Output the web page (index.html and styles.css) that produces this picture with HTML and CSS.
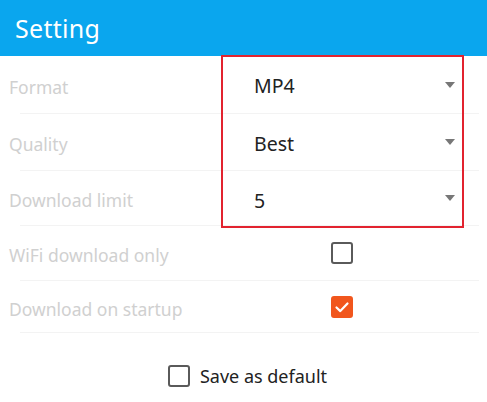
FILE: index.html
```html
<!DOCTYPE html>
<html>
<head>
<meta charset="utf-8">
<link rel="stylesheet" href="styles.css">
</head>
<body>
<div class="app">
  <header class="appbar"><h1 class="title">Setting</h1></header>
  <main class="settings">
    <div class="row r1">
      <span class="label">Format</span>
      <div class="value select"><span class="val">MP4</span><span class="caret"></span></div>
    </div>
    <div class="row r2">
      <span class="label">Quality</span>
      <div class="value select"><span class="val">Best</span><span class="caret"></span></div>
    </div>
    <div class="row r3">
      <span class="label">Download limit</span>
      <div class="value select"><span class="val">5</span><span class="caret"></span></div>
    </div>
    <div class="row r4">
      <span class="label">WiFi download only</span>
      <div class="value check-cell"><span class="box"></span></div>
    </div>
    <div class="row r5">
      <span class="label">Download on startup</span>
      <div class="value check-cell"><span class="box checked"><svg viewBox="0 0 22 22" width="22" height="22"><path d="M5.5 11.5l3.8 3.6 7.2-7.6" fill="none" stroke="#fff" stroke-width="2.2" stroke-linecap="round" stroke-linejoin="round"/></svg></span></div>
    </div>
    <div class="highlight"></div>
  </main>
  <footer class="footer">
    <label class="save"><span class="box"></span><span class="save-text">Save as default</span></label>
  </footer>
</div>
</body>
</html>
```

FILE: styles.css
```css
* { box-sizing: border-box; }
html, body { margin: 0; padding: 0; background: #fff; }
body { font-family: "Noto Sans", "Open Sans", "Liberation Sans", sans-serif; width: 487px; height: 402px; overflow: hidden; }
.appbar { height: 56px; background: #0aa6ee; display: flex; align-items: center; padding-left: 15px; }
.title { margin: 0; color: #fff; font-weight: 400; font-size: 25px; letter-spacing: 0.3px; }
.settings { position: relative; }
.row { display: flex; align-items: center; height: 58px; margin-left: 20px; margin-right: 8px; border-bottom: 1px solid #f3f3f3; }
.row.r2 { height: 57px; }
.row.r3 { height: 55px; }
.row.r4 { height: 55px; }
.row.r5 { height: 52px; }
.label { width: 212px; margin-left: -11px; font-size: 17.5px; color: #d0d0d0; padding-top: 4px; }
.value { flex: 1; display: flex; align-items: center; }
.select { padding-left: 33px; padding-right: 24px; }
.val { flex: 1; font-size: 19.5px; color: #222; padding-top: 2px; }
.r3 .val { padding-top: 5px; }
.caret { width: 0; height: 0; border-left: 5.5px solid transparent; border-right: 5.5px solid transparent; border-top: 6px solid #777; }
.check-cell { padding-left: 110px; }
.box { width: 22px; height: 22px; border: 2px solid #5a5a5a; border-radius: 3px; display: inline-flex; }
.box.checked { background: #f1561d; border-color: #f1561d; align-items: center; justify-content: center; }
.box.checked svg { margin: -2px; }
.highlight { position: absolute; left: 221px; top: -1px; width: 243px; height: 173px; border: 2px solid #e2232f; pointer-events: none; }
.footer { display: flex; justify-content: center; padding-top: 31px; }
.save { display: flex; align-items: center; gap: 10px; padding-left: 8px; }
.save-text { font-size: 18px; color: #222; }
```
